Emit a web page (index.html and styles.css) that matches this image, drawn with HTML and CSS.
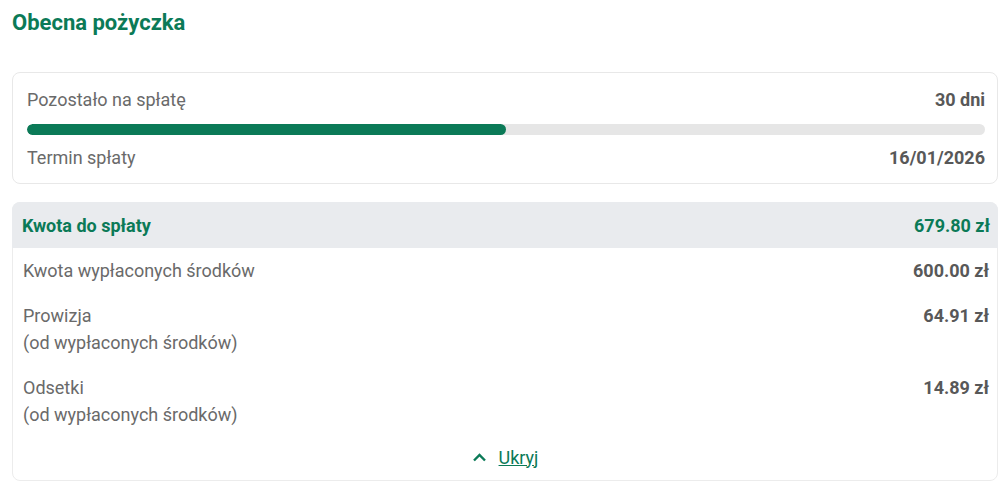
FILE: index.html
```html
<!DOCTYPE html>
<html lang="pl">
<head>
<meta charset="utf-8">
<link rel="stylesheet" href="styles.css">
</head>
<body>
<div class="page">
  <h1 class="title">Obecna pożyczka</h1>
  <div class="card progress-card">
    <div class="row">
      <span class="label">Pozostało na spłatę</span>
      <span class="value">30 dni</span>
    </div>
    <div class="bar"><div class="fill" style="width:50%"></div></div>
    <div class="row">
      <span class="label">Termin spłaty</span>
      <span class="value">16/01/2026</span>
    </div>
  </div>
  <div class="card details">
    <div class="head">
      <span>Kwota do spłaty</span>
      <span>679.80 zł</span>
    </div>
    <div class="item">
      <span class="label">Kwota wypłaconych środków</span>
      <span class="value">600.00 zł</span>
    </div>
    <div class="item">
      <span class="label">Prowizja<br>(od wypłaconych środków)</span>
      <span class="value">64.91 zł</span>
    </div>
    <div class="item">
      <span class="label">Odsetki<br>(od wypłaconych środków)</span>
      <span class="value">14.89 zł</span>
    </div>
    <div class="toggle">
      <svg width="15" height="10" viewBox="0 0 15 10"><path d="M2 8.5 L7.5 3 L13 8.5" fill="none" stroke="#0b7a57" stroke-width="2.4"/></svg>
      <a class="link">Ukryj</a>
    </div>
  </div>
</div>
</body>
</html>
```
FILE: styles.css
```css
* { box-sizing: border-box; }
body { margin: 0; background: #fff; font-family: Roboto, "Noto Sans", sans-serif; }
.page { padding: 8px 2px 0 12px; }
.title { margin: 0 0 34px; font-size: 22px; font-weight: 700; color: #0b7a57; line-height: 30px; }
.card { border: 1px solid #e8e8e8; border-radius: 8px; background: #fff; }
.progress-card { padding: 14px 12px 14px 14px; }
.row { display: flex; justify-content: space-between; align-items: center; height: 24px; }
.label { font-size: 18px; color: #6a6a6a; line-height: 27px; }
.value { font-size: 18px; font-weight: 700; color: #585858; line-height: 27px; }
.bar { height: 11px; background: #e6e6e6; border-radius: 6px; margin: 13px 0 10px; overflow: hidden; }
.fill { height: 100%; background: #0b7a57; border-radius: 6px; }
.details { margin-top: 18px; border-color: #ececec; padding-bottom: 12px; }
.head { display: flex; justify-content: space-between; align-items: center; height: 46px; background: #e9ebee; border-radius: 8px 8px 0 0; padding: 0 8px 0 10px; margin: -1px -1px 0; font-size: 18px; font-weight: 700; color: #0b7a57; }
.item { display: flex; justify-content: space-between; align-items: flex-start; padding: 9px 8px 9px 10px; }
.item:first-of-type { padding-top: 10px; }
.toggle { display: flex; justify-content: center; align-items: center; gap: 12px; padding-top: 9px; height: 31px; }
.link { color: #0b7a57; text-decoration: underline; font-size: 18px; }
```
